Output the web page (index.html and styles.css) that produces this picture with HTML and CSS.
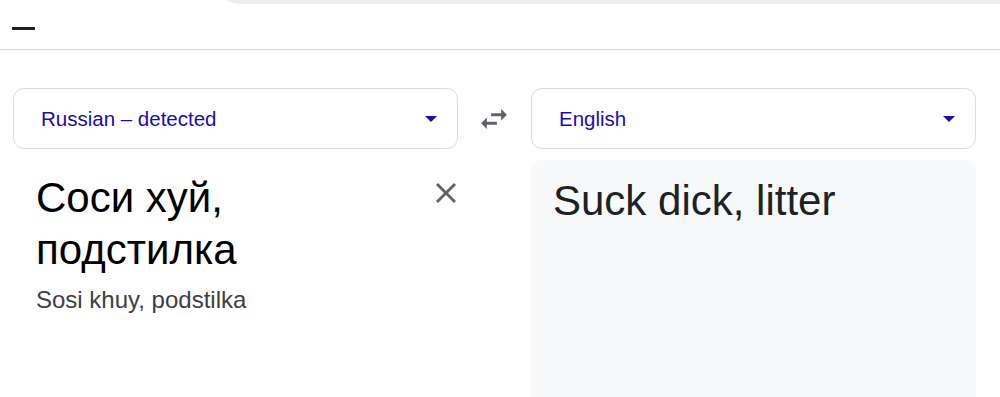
FILE: index.html
```html
<!DOCTYPE html>
<html lang="en">
<head>
  <meta charset="UTF-8">
  <meta name="viewport" content="width=device-width, initial-scale=1.0">
  <title>Translate</title>
  <link rel="stylesheet" href="styles.css">
</head>
<body>

<header class="topbar">
  <div class="search-edge"></div>
  <div class="menu-dash"></div>
</header>

<main class="translator">
  <div class="lang-row">
    <button class="lang-select">
      <span>Russian – detected</span>
      <span class="caret"></span>
    </button>
    <button class="swap" aria-label="Swap languages">
      <svg width="26" height="20" viewBox="3 5 18 14">
        <path fill="#5f6368" d="M6.99 11L3 15l3.99 4v-3H14v-2H6.99v-3zM21 9l-3.99-4v3H10v2h7.01v3L21 9z"/>
      </svg>
    </button>
    <button class="lang-select">
      <span>English</span>
      <span class="caret"></span>
    </button>
  </div>

  <div class="panels">
    <div class="source">
      <div class="source-text">
        <div class="source-main">Соси хуй, подстилка</div>
        <div class="translit">Sosi khuy, podstilka</div>
      </div>
      <button class="clear" aria-label="Clear">
        <svg width="20" height="20" viewBox="5 5 14 14">
          <path fill="#5f6368" d="M19 6.41L17.59 5 12 10.59 6.41 5 5 6.41 10.59 12 5 17.59 6.41 19 12 13.41 17.59 19 19 17.59 13.41 12z"/>
        </svg>
      </button>
    </div>
    <div class="spacer"></div>
    <div class="output">
      <div class="output-main">Suck dick, litter</div>
    </div>
  </div>
</main>

</body>
</html>
```

FILE: styles.css
```css
body {
  margin: 0;
  font-family: "Liberation Sans", Arial, sans-serif;
  background: #fff;
  overflow: hidden;
}
.topbar {
  display: flow-root;
  height: 49px;
  border-bottom: 1px solid #dadce0;
}
.search-edge {
  height: 30px;
  margin-top: -26px;
  margin-left: 214px;
  background: #ededed;
  border-bottom-left-radius: 26px;
}
.menu-dash {
  width: 23px;
  height: 3px;
  margin-top: 23px;
  margin-left: 12px;
  background: #202124;
}
.translator {
  margin: 38px 0 0 13px;
  width: 963px;
}
.lang-row {
  display: grid;
  grid-template-columns: 445px 73px 445px;
  height: 61px;
}
.lang-select {
  display: flex;
  align-items: center;
  justify-content: space-between;
  padding: 0 20px 0 27px;
  border: 1px solid #dadce0;
  border-radius: 11px;
  background: #fff;
  font-family: inherit;
  font-size: 20.5px;
  color: #1a0dab;
  text-align: left;
}
.caret {
  width: 0;
  height: 0;
  border-left: 6px solid transparent;
  border-right: 6px solid transparent;
  border-top: 6px solid #1a0dab;
}
.swap {
  display: flex;
  align-items: center;
  justify-content: center;
  padding: 0 2px 0 0;
  border: none;
  background: none;
}
.panels {
  display: grid;
  grid-template-columns: 445px 73px 445px;
  margin-top: 11px;
}
.source {
  display: flex;
  align-items: flex-start;
  padding: 12px 2px 0 23px;
}
.source-text {
  flex: 1;
}
.source-main {
  font-size: 42px;
  line-height: 52px;
  color: #000;
  padding-right: 18px;
}
.translit {
  margin-top: 10px;
  font-size: 24px;
  line-height: 28px;
  color: #3c4043;
}
.clear {
  margin-top: 11px;
  padding: 0;
  border: none;
  background: none;
  width: 20px;
  height: 20px;
}
.output {
  background: #f8f9fa;
  border-radius: 11px;
  min-height: 280px;
  padding: 15px 21px 0 22px;
}
.output-main {
  font-size: 42px;
  line-height: 52px;
  color: #202124;
}
```
